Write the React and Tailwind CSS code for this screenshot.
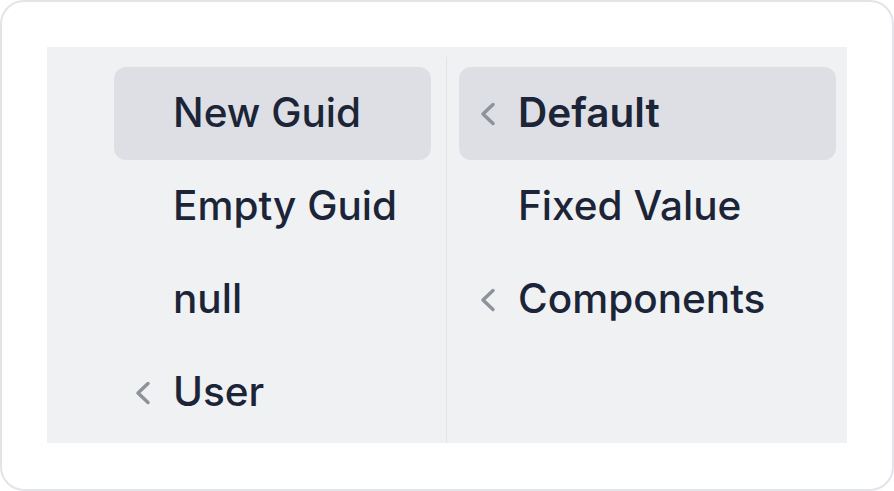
import React from "react";

function Chevron() {
  return (
    <svg width="16" height="26" viewBox="0 0 16 26" className="block">
      <polyline points="13,3.5 3,13 13,22.5" fill="none" stroke="#8e929a" strokeWidth="3.5" strokeLinecap="round" strokeLinejoin="round" />
    </svg>
  );
}

function Row({ label, active, chevron, bold }) {
  return (
    <div className={"h-[93px] flex items-center rounded-[12px] " + (active ? "bg-[#dedfe4]" : "")}>
      <div className="w-[59px] pl-[21px] flex items-center">{chevron ? <Chevron /> : null}</div>
      <span className={"text-[40.5px] leading-none text-[#1c2538] " + (bold ? "font-semibold" : "font-medium")}>{label}</span>
    </div>
  );
}

export default function App() {
  return (
    <div className="w-[894px] h-[491px] bg-white" style={{ fontFamily: "Inter, 'Noto Sans', sans-serif" }}>
      <div className="w-[894px] h-[491px] border-2 border-[#e2e4e8] rounded-[24px] bg-white p-[45px]">
        <div className="w-[800px] h-[396px] bg-[#f0f1f3] flex overflow-hidden">
          <div className="w-[399px] pt-[20px] pl-[67px] pr-[15px] flex flex-col">
            <Row label="New Guid" active />
            <Row label="Empty Guid" />
            <Row label="null" />
            <Row label="User" chevron />
          </div>
          <div className="w-px bg-[#e1e3e7] mt-[10px]" />
          <div className="flex-1 pt-[20px] pl-[12px] pr-[11px] flex flex-col">
            <Row label="Default" active chevron bold />
            <Row label="Fixed Value" />
            <Row label="Components" chevron />
          </div>
        </div>
      </div>
    </div>
  );
}
